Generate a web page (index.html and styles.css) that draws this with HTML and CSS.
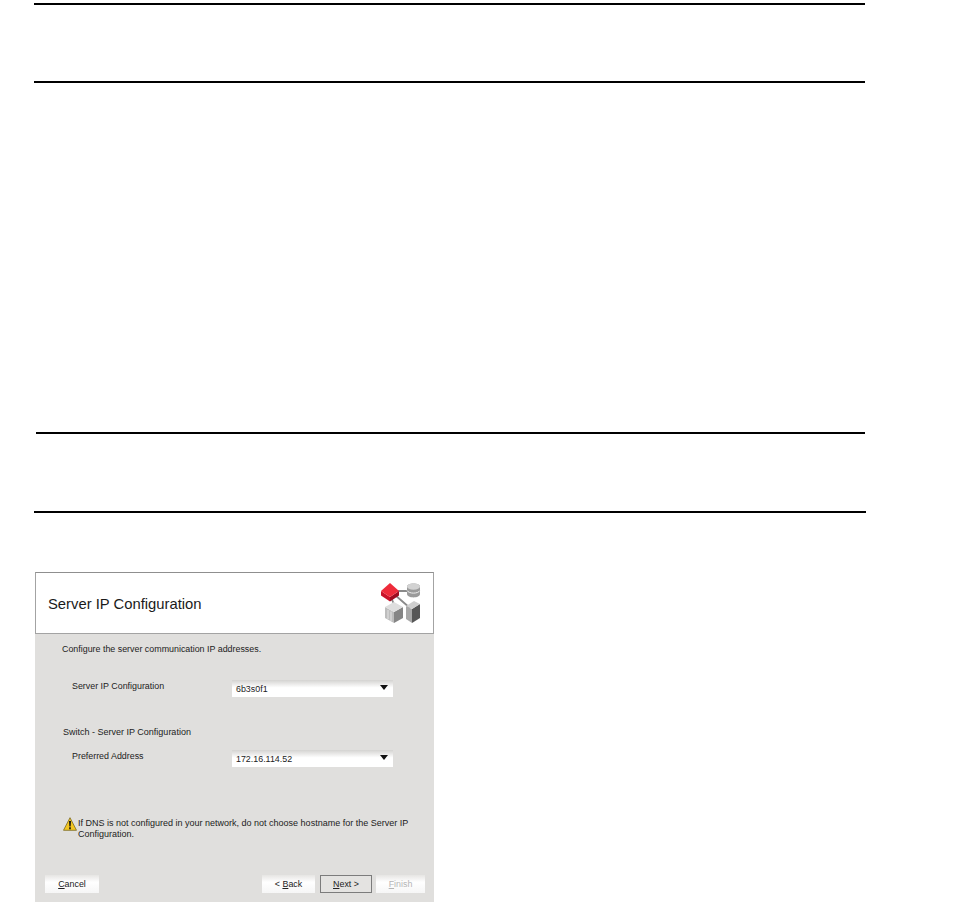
FILE: index.html
```html
<html>
<head>
<title>Server IP Configuration</title>
<link rel="stylesheet" href="styles.css">
</head>
<body>
<div class="rule rule-first"></div>
<div class="rule rule-gap-small"></div>
<div class="rule rule-inset rule-gap-large"></div>
<div class="rule rule-gap-small2"></div>

<div class="dialog">
  <div class="dialog-head">
    <h1>Server IP Configuration</h1>
    <svg class="logo" width="41" height="41" viewBox="0 0 41 41">
      <!-- connectors -->
      <path d="M14 8H30M11 14L15 24M15 12L30 25" stroke="#8a8a8a" stroke-width="1.8" fill="none"/>
      <!-- database -->
      <path d="M27 3.500C27 -.5 40 -.5 40 3.500V11C40 15.500 27 15.500 27 11Z" fill="#9b9b9b"/>
      <ellipse cx="33.500" cy="3.500" rx="6.500" ry="3.200" fill="#d2d2d2"/>
      <path d="M27 7.500C29 11 38 11 40 7.500" stroke="#ededed" fill="none"/>
      <!-- red box -->
      <path d="M1 8L10 14V18.500L1 12.500Z" fill="#c9132a"/>
      <path d="M19 8L10 14V18.500L19 12.500Z" fill="#9e0c20"/>
      <path d="M10 0L19 8L10 14L1 8Z" fill="#ee2b3a"/>
      <!-- left box -->
      <path d="M5 24L14 29V40L5 35Z" fill="#bdbdbd"/>
      <path d="M23 24L14 29V40L23 35Z" fill="#858585"/>
      <path d="M14 19L23 24L14 29L5 24Z" fill="#dedede"/>
      <path d="M8 27V36M11 28.500V38" stroke="#e3e3e3" fill="none"/>
      <!-- tower -->
      <path d="M26 23L32 26V40L26 36Z" fill="#a8a8a8"/>
      <path d="M40 21L32 26V40L40 35Z" fill="#565656"/>
      <path d="M34 18L40 21L32 26L26 23Z" fill="#cfcfcf"/>
    </svg>
  </div>
  <div class="dialog-body">
    <p class="intro">Configure the server communication IP addresses.</p>
    <div class="field field-first">
      <span class="field-label">Server IP Configuration</span>
      <div class="combo"><span>6b3s0f1</span><i class="arrow"></i></div>
    </div>
    <p class="section">Switch - Server IP Configuration</p>
    <div class="field field-second">
      <span class="field-label">Preferred Address</span>
      <div class="combo"><span>172.16.114.52</span><i class="arrow"></i></div>
    </div>
    <div class="warning">
      <svg class="warn-icon" width="14" height="14" viewBox="0 0 14 14">
        <path d="M7 .7L13.500 13.300H.5Z" fill="#f3c623" stroke="#7a6a20" stroke-width=".8"/>
        <path d="M6 4H8L7.600 9.500H6.400ZM6.200 10.300H7.800V12.300H6.200Z" fill="#111111"/>
      </svg>
      <p>If DNS is not configured in your network, do not choose hostname for the Server IP Configuration.</p>
    </div>
    <div class="buttons">
      <button class="btn btn-cancel"><u>C</u>ancel</button>
      <div class="nav">
        <button class="btn btn-back">&lt; <u>B</u>ack</button>
        <button class="btn btn-next"><u>N</u>ext &gt;</button>
        <button class="btn btn-finish"><u>F</u>inish</button>
      </div>
    </div>
  </div>
</div>
</body>
</html>
```
FILE: styles.css
```css
body {margin:0;padding:3px 0 0 34px;background:#ffffff;font-family:"Liberation Sans",Arial,sans-serif;color:#222222;overflow:hidden;}

.rule {width:831px;height:2px;background:#000000;}
.rule-gap-small {margin-top:76px;}
.rule-inset {width:829px;margin-left:2px;}
.rule-gap-large {margin-top:349px;}
.rule-gap-small2 {margin-top:77px;width:832px;}

.dialog {width:399px;height:330px;margin:59px 0 0 1px;box-sizing:border-box;}
.dialog-head {height:62px;box-sizing:border-box;background:#ffffff;border:1px solid #a3a3a3;border-top-color:#8f8f8f;display:flex;align-items:center;justify-content:space-between;padding:0 12px 0 12px;}
.dialog-head h1 {font-size:14.8px;font-weight:normal;color:#1a1a1a;margin:2px 0 0;}
.logo {display:block;}

.dialog-body {height:268px;background:#e0dfdd;font-size:8.9px;line-height:12px;overflow:hidden;}
.dialog-body p {margin:0;}
.dialog-body .intro {margin:9px 0 0 27px;}
.field {display:flex;padding-left:37px;height:17px;}
.field-label {width:160px;}
.field-first {margin-top:25px;}
.dialog-body .section {margin:29px 0 0 28px;font-size:9px;}
.field-second {margin-top:12px;}
.combo {width:161px;height:17px;box-sizing:border-box;background:linear-gradient(#d4d3d1,#ffffff 45%);display:flex;align-items:center;justify-content:space-between;padding:0 5px 0 4px;}
.arrow {width:0;height:0;border-left:4px solid transparent;border-right:4px solid transparent;border-top:5px solid #111111;margin-top:-2px;}
.warning {display:flex;align-items:flex-start;margin:51px 0 0 28px;width:352px;font-size:9px;}
.warn-icon {flex:none;margin:-1px 1px 0 0;}
.dialog-body .warning p {line-height:11px;}
.buttons {display:flex;justify-content:space-between;padding:0 9px 0 10px;margin-top:35px;}
.nav {display:flex;gap:4px;}
.btn {height:18px;padding:0;border:0;font:inherit;color:#222222;background:linear-gradient(#e6e5e3,#ffffff 40%,#f6f6f6);}
.btn-cancel {width:54px;}
.btn-back {width:53px;margin-right:1px;}
.btn-next {width:52px;border:1px solid #7c7c7c;background:#e4e3e1;}
.btn-finish {width:49px;color:#b5b5b5;}
```
